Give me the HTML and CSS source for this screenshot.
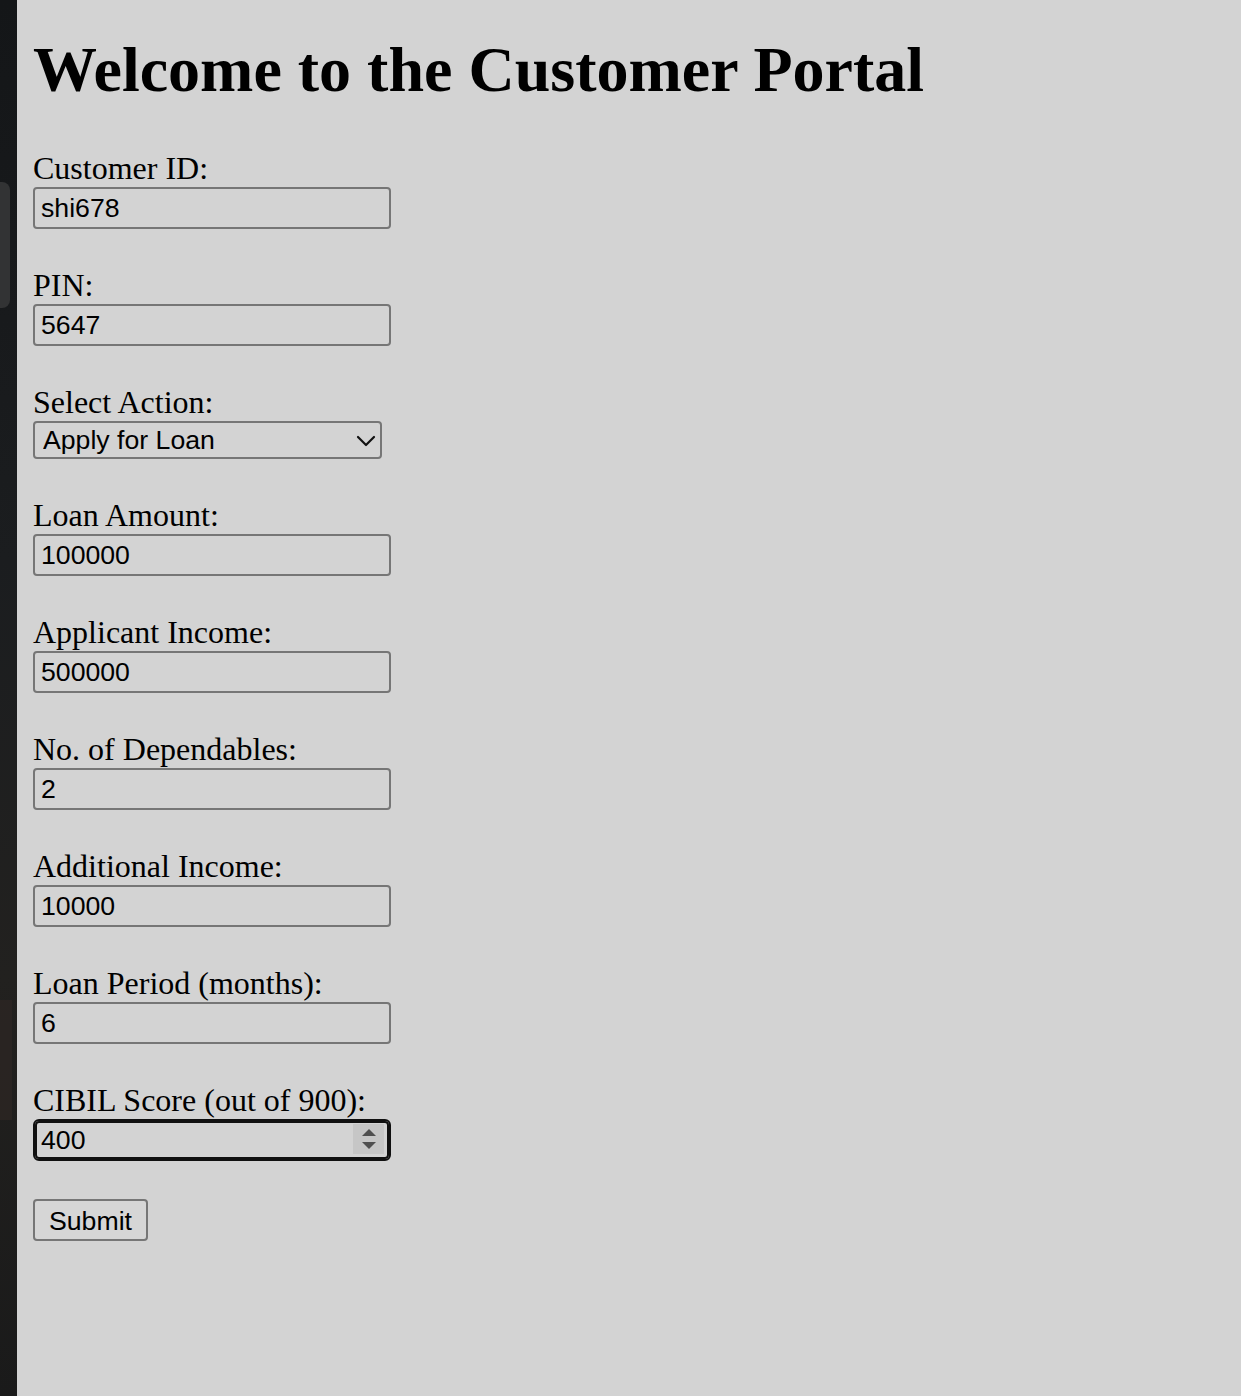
FILE: index.html
```html
<!DOCTYPE html>
<html lang="en">
<head>
<meta charset="utf-8">
<title>Customer Portal</title>
<link rel="stylesheet" href="styles.css">
</head>
<body>
<div class="page">
  <aside class="backdrop"><span class="backdrop-tab"></span><span class="backdrop-glow"></span></aside>
  <main class="portal">
    <h1 class="title">Welcome to the Customer Portal</h1>
    <form class="form">
      <div class="field">
        <label class="label" for="cid">Customer ID:</label>
        <input class="control" id="cid" type="text" value="shi678">
      </div>
      <div class="field">
        <label class="label" for="pin">PIN:</label>
        <input class="control" id="pin" type="text" value="5647">
      </div>
      <div class="field">
        <label class="label" for="action">Select Action:</label>
        <span class="select-wrap">
          <select class="select" id="action">
            <option>Apply for Loan</option>
          </select>
          <svg class="chevron" width="20" height="12" viewBox="0 0 20 12"><path d="M2 2 L10 10 L18 2" fill="none" stroke="#111" stroke-width="2.2" stroke-linecap="round" stroke-linejoin="round"/></svg>
        </span>
      </div>
      <div class="field">
        <label class="label" for="amount">Loan Amount:</label>
        <input class="control" id="amount" type="text" value="100000">
      </div>
      <div class="field">
        <label class="label" for="income">Applicant Income:</label>
        <input class="control" id="income" type="text" value="500000">
      </div>
      <div class="field">
        <label class="label" for="deps">No. of Dependables:</label>
        <input class="control" id="deps" type="text" value="2">
      </div>
      <div class="field">
        <label class="label" for="addinc">Additional Income:</label>
        <input class="control" id="addinc" type="text" value="10000">
      </div>
      <div class="field">
        <label class="label" for="period">Loan Period (months):</label>
        <input class="control" id="period" type="text" value="6">
      </div>
      <div class="field">
        <label class="label" for="cibil">CIBIL Score (out of 900):</label>
        <span class="number-wrap">
          <input class="control control-focused" id="cibil" type="text" value="400">
          <span class="spinner">
            <svg width="18" height="26" viewBox="0 0 18 26"><path d="M2 10 L9 3 L16 10 Z" fill="#4f4f4f"/><path d="M2 16 L9 23 L16 16 Z" fill="#4f4f4f"/></svg>
          </span>
        </span>
      </div>
      <button class="submit" type="button">Submit</button>
    </form>
  </main>
</div>
</body>
</html>
```
FILE: styles.css
```css
html, body {
  margin: 0;
  padding: 0;
}

body {
  background: #17191b;
}

.page {
  display: flex;
  min-height: 1396px;
}

.backdrop {
  position: relative;
  width: 17px;
  flex: none;
  background: linear-gradient(180deg, #141618 0%, #1b1d1f 40%, #22211f 70%, #1a1a1a 100%);
  overflow: hidden;
}

.backdrop-tab {
  position: absolute;
  left: -12px;
  top: 182px;
  width: 22px;
  height: 126px;
  border-radius: 8px;
  background: #323334;
}

.backdrop-glow {
  position: absolute;
  left: 0;
  top: 1000px;
  width: 12px;
  height: 120px;
  background: #2d2723;
  opacity: 0.7;
}

.portal {
  flex: 1;
  background: #d3d3d3;
  padding: 0 16px;
}

.title {
  font-family: "Liberation Serif", "Times New Roman", serif;
  font-size: 64px;
  font-weight: bold;
  line-height: 74px;
  margin: 33px 0 43px;
  color: #000;
}

.form {
  display: flex;
  flex-direction: column;
  align-items: flex-start;
}

.field {
  display: flex;
  flex-direction: column;
  align-items: flex-start;
  margin-bottom: 38px;
}

.label {
  font-family: "Liberation Serif", "Times New Roman", serif;
  font-size: 32px;
  line-height: 37px;
  color: #000;
}

.control {
  box-sizing: border-box;
  width: 358px;
  height: 42px;
  margin: 0;
  padding: 0 6px;
  border: 2px solid #767676;
  border-radius: 4px;
  background: transparent;
  font-family: "Liberation Sans", Arial, sans-serif;
  font-size: 26.67px;
  color: #000;
  outline: none;
}

.control-focused {
  border-color: #101010;
  box-shadow: inset 0 0 0 2px #101010;
  border-radius: 6px;
}

.select-wrap,
.number-wrap {
  position: relative;
  display: inline-block;
}

.select {
  appearance: none;
  -webkit-appearance: none;
  box-sizing: border-box;
  width: 349px;
  height: 38px;
  margin: 0;
  padding: 0 8px;
  border: 2px solid #767676;
  border-radius: 4px;
  background: transparent;
  font-family: "Liberation Sans", Arial, sans-serif;
  font-size: 26.67px;
  color: #000;
}

.chevron {
  position: absolute;
  right: 6px;
  top: 14px;
  pointer-events: none;
}

.spinner {
  position: absolute;
  right: 7px;
  top: 5px;
  width: 31px;
  height: 30px;
  background: #c6c6c6;
  display: flex;
  align-items: center;
  justify-content: center;
}

.submit {
  box-sizing: border-box;
  width: 115px;
  height: 42px;
  margin: 0;
  padding: 2px 0 0;
  border: 2px solid #767676;
  border-radius: 4px;
  background: #d6d6d6;
  font-family: "Liberation Sans", Arial, sans-serif;
  font-size: 26.67px;
  color: #000;
}
```
